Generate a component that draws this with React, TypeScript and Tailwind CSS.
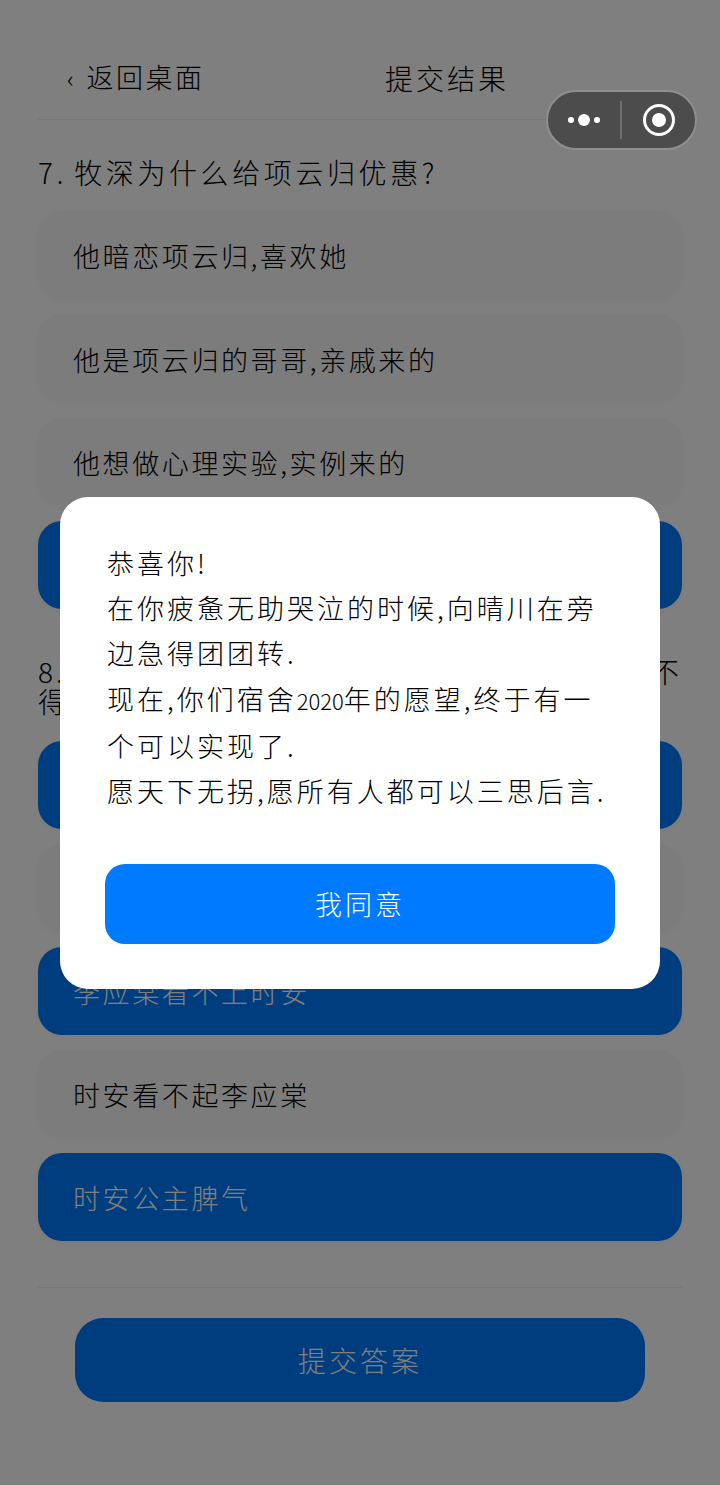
const fontStack = '"Noto Sans CJK SC", "Noto Sans", sans-serif';

type Option = { label: string; selected?: boolean };

// Labels stay empty where the dialog covers the whole row
const question7: Option[] = [
  { label: '他暗恋项云归,喜欢她' },
  { label: '他是项云归的哥哥,亲戚来的' },
  { label: '他想做心理实验,实例来的' },
  { label: '', selected: true },
];

const question8: Option[] = [
  { label: '', selected: true },
  { label: '' },
  { label: '李应棠看不上时安', selected: true },
  { label: '时安看不起李应棠' },
  { label: '时安公主脾气', selected: true },
];

function OptionCard({ option }: { option: Option }) {
  return (
    <div
      className={`flex h-[88px] items-center rounded-[24px] pl-[35px] pt-[3px] text-[27px] tracking-[2.6px] shadow-[0_2px_8px_rgba(0,0,0,0.04)] ${
        option.selected ? 'bg-[#007aff] text-white' : 'bg-[#f8f8f8] text-black'
      }`}
    >
      {option.label}
    </div>
  );
}

export default function App() {
  return (
    <div
      className="relative h-[1485px] w-[720px] overflow-hidden bg-white font-light text-black"
      style={{ fontFamily: fontStack }}
    >
      {/* Page under the mask */}
      <div className="px-[38px] pt-[40px]">
        <header className="flex h-[80px] items-center border-b border-[#ececec] pb-[4px] text-[27px] tracking-[2.5px]">
          <span className="ml-[29px] w-[318px] shrink-0">
            <span className="mr-[10px] text-[24px]">‹</span>返回桌面
          </span>
          <span className="text-[28px] tracking-[3px]">提交结果</span>
        </header>

        <h2 className="mt-[33px] text-[28px] leading-[38px] tracking-[3.6px]">
          7.<span className="ml-[7px]">牧深为什么给项云归优惠?</span>
        </h2>

        <div className="mt-[20px] flex flex-col gap-[15.3px]">
          {question7.map((option, i) => (
            <OptionCard key={i} option={option} />
          ))}
        </div>

        <h2 className="mt-[47px] flex flex-col text-[28px] leading-[30px] tracking-[3px]">
          <span className="flex justify-between">
            <span>8.</span>
            <span>不</span>
          </span>
          <span>得</span>
        </h2>

        <div className="mt-[25px] flex flex-col gap-[15px]">
          {question8.map((option, i) => (
            <OptionCard key={i} option={option} />
          ))}
        </div>

        <div className="mt-[46px] border-t border-[#ececec]" />

        <button className="mx-[37px] mt-[30px] flex h-[84px] w-[570px] items-center justify-center rounded-[28px] bg-[#007aff] text-[28px] tracking-[3px] text-white">
          提交答案
        </button>
      </div>

      {/* Mask and dialog */}
      <div className="absolute inset-0 bg-black/50" />
      <div className="absolute left-[60px] top-[497px] flex h-[492px] w-[600px] flex-col rounded-[28px] bg-white px-[45px] pt-[43px]">
        <div className="pl-[2px] text-[27px] leading-[45.2px] tracking-[3px] whitespace-nowrap">
          <div>恭喜你!</div>
          <div>在你疲惫无助哭泣的时候,向晴川在旁</div>
          <div>边急得团团转.</div>
          <div>
            现在,你们宿舍<span className="text-[22px] tracking-normal">2020</span>年的愿望,终于有一
          </div>
          <div>个可以实现了.</div>
          <div>愿天下无拐,愿所有人都可以三思后言.</div>
        </div>
        <button className="mt-[51px] flex h-[80px] w-[510px] items-center justify-center rounded-[20px] bg-[#007aff] text-[27px] tracking-[3px] text-white">
          我同意
        </button>
      </div>

      {/* Mini program capsule */}
      <div className="absolute left-[546px] top-[90px] flex h-[60px] w-[151px] items-center rounded-full border-2 border-[#8f8f8f] bg-[#4c4c4c]">
        <div className="flex w-[72px] items-center justify-center gap-[4px]">
          <span className="h-[6px] w-[6px] rounded-full bg-white" />
          <span className="h-[12px] w-[12px] rounded-full bg-white" />
          <span className="h-[6px] w-[6px] rounded-full bg-white" />
        </div>
        <div className="h-[38px] w-[2px] bg-[#6f6f6f]" />
        <div className="flex flex-1 items-center justify-center">
          <div className="flex h-[32px] w-[32px] items-center justify-center rounded-full border-[3px] border-white">
            <span className="h-[14px] w-[14px] rounded-full bg-white" />
          </div>
        </div>
      </div>
    </div>
  );
}
